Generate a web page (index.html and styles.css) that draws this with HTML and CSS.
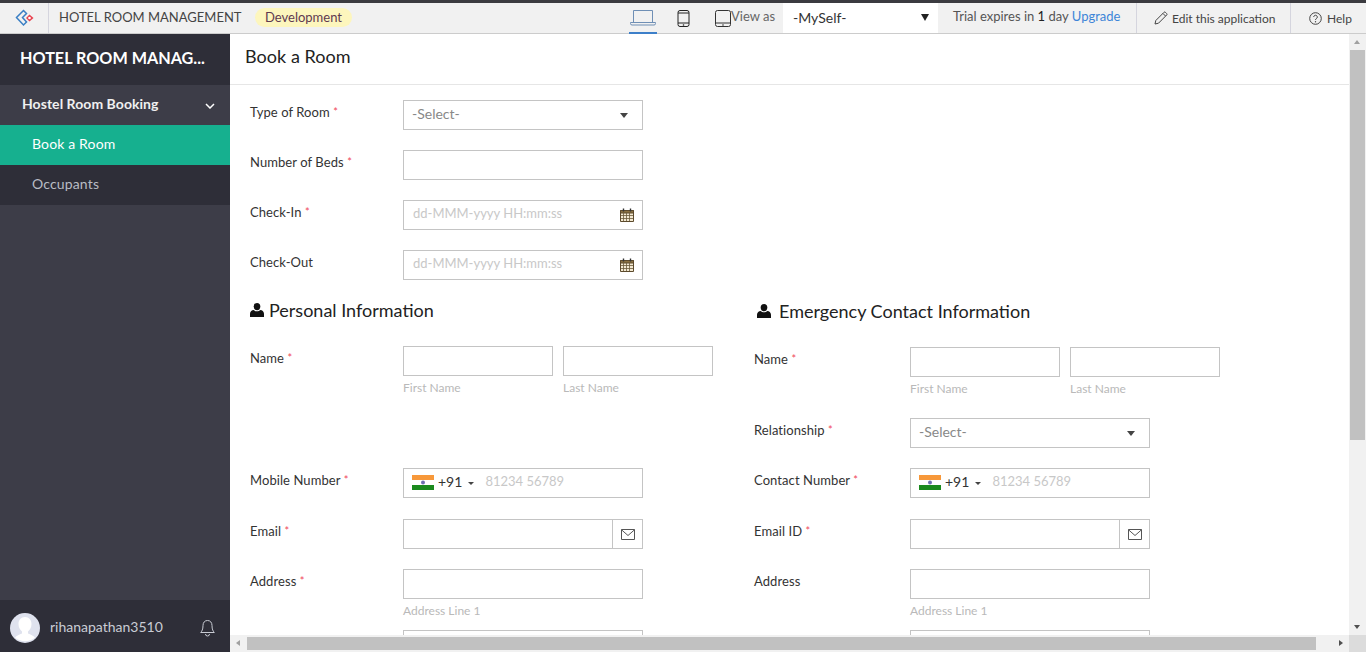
FILE: index.html
```html
<!DOCTYPE html>
<html lang="en">
<head>
  <meta charset="UTF-8">
  <title>Hotel Room Management</title>
  <link rel="stylesheet" href="styles.css">
</head>
<body>
  <svg class="defs" width="0" height="0">
    <symbol id="cal" viewBox="0 0 14 14">
      <path d="M.5 2.500h13v11H.5z" fill="#f3e9d2" stroke="#5c4a2c"/>
      <path d="M.5 2.500h13v2.500H.5z" fill="#8a7140" stroke="#5c4a2c"/>
      <path d="M3.500 5v8M6.500 5v8M9.500 5v8M1 7.500h12M1 10.500h12" stroke="#6b5a3a" stroke-width=".8" fill="none"/>
      <path d="M3.500 .5v3M10.500 .5v3" stroke="#333" stroke-width="1.400"/>
    </symbol>
    <symbol id="person" viewBox="0 0 14 14">
      <ellipse cx="7" cy="3.600" rx="3.300" ry="3.600" fill="#111"/>
      <path d="M0 14v-3.200C0 8.600 2 7.300 3.600 7.100 4.600 8 5.700 8.300 7 8.300S9.400 8 10.400 7.100C12 7.300 14 8.600 14 10.800V14z" fill="#111"/>
    </symbol>
    <symbol id="flag" viewBox="0 0 22 15">
      <path d="M0 0h22v5H0z" fill="#f7983a"/>
      <path d="M0 5h22v5H0z" fill="#fff"/>
      <path d="M0 10h22v5H0z" fill="#1b8a1e"/>
      <circle cx="11" cy="7.500" r="2" fill="#6d6fb0"/>
    </symbol>
    <symbol id="mail" viewBox="0 0 14 11">
      <path d="M.5.500h13v10H.5z" fill="none" stroke="#555"/>
      <path d="M.5.800 7 6.500 13.500.800" fill="none" stroke="#555"/>
    </symbol>
  </svg>

  <header class="topbar">
    <div class="logo">
      <svg width="20" height="18" viewBox="0 0 20 18">
        <path d="M8.500 1.500 1.500 8.500l7 7.500 3-3-4-4.500 4-4z" fill="none" stroke="#3a7fc4" stroke-width="1.500"/>
        <path d="M14.500 5.500l4 3.500-4 3.500-3.500-3.500z" fill="#e8424f"/>
        <circle cx="14.500" cy="9" r="1.300" fill="#fff"/>
      </svg>
    </div>
    <span class="app-name">HOTEL ROOM MANAGEMENT</span>
    <span class="env-pill">Development</span>
    <div class="device active">
      <svg width="26" height="17" viewBox="0 0 26 17"><path d="M3.500 1.500h19v12h-19z" fill="none" stroke="#6f8fb5"/><path d="M.5 13.500h25v1a1.500 1.500 0 0 1-1.500 1.500H2a1.500 1.500 0 0 1-1.500-1.500z" fill="none" stroke="#6f8fb5"/></svg>
    </div>
    <div class="device phone">
      <svg width="13" height="17" viewBox="0 0 13 17"><rect x="1" y=".5" width="11" height="16" rx="2" fill="none" stroke="#222"/><path d="M1 3h11M1 13h11" stroke="#222"/><circle cx="6.500" cy="15" r=".8" fill="#222"/></svg>
    </div>
    <div class="device tablet">
      <svg width="16" height="17" viewBox="0 0 16 17"><rect x=".5" y=".5" width="15" height="16" rx="2" fill="none" stroke="#333"/><path d="M.5 13h15" stroke="#333"/><circle cx="8" cy="15" r=".8" fill="#333"/></svg>
    </div>
    <span class="view-as">View as</span>
    <div class="view-select"><span>-MySelf-</span><i class="caret-big"></i></div>
    <span class="trial">Trial expires in <b>1</b> day <a href="#">Upgrade</a></span>
    <div class="top-action edit">
      <svg width="14" height="14" viewBox="0 0 14 14"><path d="M1 13l.8-3.500L10 1.300a1 1 0 0 1 1.400 0l1.300 1.300a1 1 0 0 1 0 1.400L4.500 12.200z M9 2.500l2.500 2.500" fill="none" stroke="#444"/></svg>
      <span>Edit this application</span>
    </div>
    <div class="top-action help">
      <svg width="13" height="13" viewBox="0 0 13 13"><circle cx="6.500" cy="6.500" r="5.800" fill="none" stroke="#444"/><path d="M4.700 5a1.800 1.800 0 1 1 2.700 1.600c-.6.400-.9.700-.9 1.400" fill="none" stroke="#444"/><circle cx="6.500" cy="9.800" r=".7" fill="#444"/></svg>
      <span>Help</span>
    </div>
  </header>

  <div class="shell">
    <aside class="sidebar">
      <div class="side-title">HOTEL ROOM MANAG...</div>
      <div class="side-group">
        <span>Hostel Room Booking</span>
        <svg width="10" height="6" viewBox="0 0 10 6"><path d="M1 1l4 4 4-4" fill="none" stroke="#fff" stroke-width="1.500"/></svg>
      </div>
      <a class="side-item selected" href="#">Book a Room</a>
      <a class="side-item" href="#">Occupants</a>
      <div class="side-fill"></div>
      <div class="side-user">
        <svg class="avatar" width="30" height="30" viewBox="0 0 30 30">
          <circle cx="15" cy="15" r="15" fill="#dfe2ee"/>
          <path d="M15 4c4 0 6.500 3 6.500 7s-2 6-3.500 7.500v2c2.500 1 5.500 2 7 4a15 15 0 0 1-20 0c1.500-2 4.500-3 7-4v-2C10.500 17 8.500 15 8.500 11s2.500-7 6.500-7z" fill="#fff"/>
        </svg>
        <span class="user-name">rihanapathan3510</span>
        <svg class="bell" width="15" height="18" viewBox="0 0 15 18"><path d="M7.500 1.500c-3 0-4.500 2.300-4.500 5 0 4-1 5.500-2.300 7h13.600C13 12 12 10.500 12 6.500c0-2.700-1.500-5-4.500-5z" fill="none" stroke="#c9ccd4"/><path d="M5.500 15a2 2 0 0 0 4 0" fill="none" stroke="#c9ccd4"/></svg>
      </div>
    </aside>

    <div class="main-wrap">
      <div class="main-row">
        <main class="main">
          <h1 class="page-title">Book a Room</h1>
          <div class="form">
            <div class="field">
              <label>Type of Room <em>*</em></label>
              <div class="select"><span>-Select-</span><i class="caret"></i></div>
            </div>
            <div class="field">
              <label>Number of Beds <em>*</em></label>
              <input class="box" type="text">
            </div>
            <div class="field">
              <label>Check-In <em>*</em></label>
              <div class="box date"><input type="text" placeholder="dd-MMM-yyyy HH:mm:ss"><svg width="14" height="14"><use href="#cal"/></svg></div>
            </div>
            <div class="field">
              <label>Check-Out</label>
              <div class="box date"><input type="text" placeholder="dd-MMM-yyyy HH:mm:ss"><svg width="14" height="14"><use href="#cal"/></svg></div>
            </div>

            <div class="columns">
              <section class="col">
                <h2 class="section-title"><svg width="14" height="14"><use href="#person"/></svg>Personal Information</h2>
                <div class="field tall">
                  <label>Name <em>*</em></label>
                  <div class="name-pair">
                    <div><input class="box" type="text"><small>First Name</small></div>
                    <div><input class="box" type="text"><small>Last Name</small></div>
                  </div>
                </div>
                <div class="field phone-row">
                  <label>Mobile Number <em>*</em></label>
                  <div class="box phone-box"><svg width="22" height="15"><use href="#flag"/></svg><span>+91</span><i class="caret small"></i><input type="text" placeholder="81234 56789"></div>
                </div>
                <div class="field">
                  <label>Email <em>*</em></label>
                  <div class="box email-box"><input type="text"><span class="addon"><svg width="14" height="11"><use href="#mail"/></svg></span></div>
                </div>
                <div class="field addr">
                  <label>Address <em>*</em></label>
                  <div><input class="box" type="text"><small>Address Line 1</small></div>
                </div>
                <div class="field">
                  <label></label>
                  <input class="box" type="text">
                </div>
              </section>

              <section class="col right">
                <h2 class="section-title"><svg width="14" height="14"><use href="#person"/></svg>Emergency Contact Information</h2>
                <div class="field named">
                  <label>Name <em>*</em></label>
                  <div class="name-pair">
                    <div><input class="box" type="text"><small>First Name</small></div>
                    <div><input class="box" type="text"><small>Last Name</small></div>
                  </div>
                </div>
                <div class="field">
                  <label>Relationship <em>*</em></label>
                  <div class="select"><span>-Select-</span><i class="caret"></i></div>
                </div>
                <div class="field phone-row">
                  <label>Contact Number <em>*</em></label>
                  <div class="box phone-box"><svg width="22" height="15"><use href="#flag"/></svg><span>+91</span><i class="caret small"></i><input type="text" placeholder="81234 56789"></div>
                </div>
                <div class="field">
                  <label>Email ID <em>*</em></label>
                  <div class="box email-box"><input type="text"><span class="addon"><svg width="14" height="11"><use href="#mail"/></svg></span></div>
                </div>
                <div class="field addr">
                  <label>Address</label>
                  <div><input class="box" type="text"><small>Address Line 1</small></div>
                </div>
                <div class="field">
                  <label></label>
                  <input class="box" type="text">
                </div>
              </section>
            </div>
          </div>
        </main>
        <div class="vscroll">
          <i class="arrow up"></i>
          <div class="vthumb"></div>
          <i class="arrow down"></i>
        </div>
      </div>
      <div class="hscroll">
        <i class="arrow left"></i>
        <div class="hthumb"></div>
        <i class="arrow right"></i>
        <div class="corner"></div>
      </div>
    </div>
  </div>
</body>
</html>
```

FILE: styles.css
```css
:root {
  --side-dark: #2e2e38;
  --side-mid: #3d3d48;
  --green: #16b08f;
  --line: #c4c4c4;
  --scroll: #f1f1f1;
  --thumb: #c1c1c1;
}

* {
  box-sizing: border-box;
}

html, body {
  height: 100%;
}

body {
  margin: 0;
  overflow: hidden;
  font-family: Lato, "Open Sans", sans-serif;
  font-size: 13px;
  color: #333;
  background: #fff;
  display: flex;
  flex-direction: column;
}

.defs {
  display: none;
}

/* top bar */
.topbar {
  height: 34px;
  flex: none;
  display: flex;
  align-items: center;
  background: #f1f1f1;
  border-top: 3px solid #3b3b40;
  border-bottom: 1px solid #ccc;
}

.logo {
  width: 49px;
  height: 100%;
  padding-left: 15px;
  display: flex;
  align-items: center;
  border-right: 1px solid #d5d5de;
}

.app-name {
  margin: 0 0 2px 10px;
  width: 196px;
  color: #444;
  white-space: nowrap;
}

.env-pill {
  width: 97px;
  height: 19px;
  line-height: 18px;
  margin-bottom: 2px;
  text-align: center;
  background: #fdf6bd;
  border-radius: 10px;
  color: #5f3a50;
}

.device {
  height: 100%;
  display: flex;
  align-items: center;
}

.device.active {
  margin-left: 277px;
  width: 28px;
  justify-content: center;
  border-bottom: 2px solid #3d7fc9;
  margin-bottom: -1px;
  height: calc(100% + 1px);
}

.device.phone {
  margin-left: 20px;
}

.device.tablet {
  margin-left: 25px;
}

.view-as {
  width: 52px;
  margin-bottom: 4px;
  color: #666;
}

.view-select {
  width: 155px;
  height: 100%;
  padding: 0 9px 2px 10px;
  background: #fff;
  display: flex;
  align-items: center;
  justify-content: space-between;
  font-size: 14px;
  color: #333;
}

.caret-big {
  border-top: 7px solid #222;
  border-left: 4px solid transparent;
  border-right: 4px solid transparent;
}

.trial {
  width: 198px;
  padding-left: 15px;
  margin-bottom: 4px;
  color: #555;
  white-space: nowrap;
}

.trial b {
  color: #222;
  font-weight: 400;
}

.trial a {
  color: #3d85d8;
  text-decoration: none;
}

.top-action {
  height: 100%;
  display: flex;
  align-items: center;
  gap: 4px;
  border-left: 1px solid #d5d5de;
  color: #444;
  font-size: 12px;
  white-space: nowrap;
}

.top-action.edit {
  width: 154px;
  padding-left: 17px;
}

.top-action.help {
  padding-left: 18px;
  gap: 5px;
}

/* sidebar */
.shell {
  flex: 1;
  min-height: 0;
  display: flex;
}

.sidebar {
  width: 230px;
  flex: none;
  display: flex;
  flex-direction: column;
  background: var(--side-mid);
  color: #fff;
}

.side-title {
  height: 51px;
  line-height: 47px;
  padding-left: 20px;
  background: var(--side-dark);
  font-size: 16.200px;
  font-weight: 700;
  white-space: nowrap;
}

.side-group {
  height: 40px;
  padding: 0 15px 4px 22px;
  display: flex;
  align-items: center;
  justify-content: space-between;
  font-size: 14px;
  font-weight: 700;
  letter-spacing: .05px;
  color: #f0f0f0;
}

.side-group svg {
  margin-top: 5px;
}

.side-item {
  height: 40px;
  line-height: 38px;
  padding-left: 32px;
  background: var(--side-dark);
  color: #b9bcc4;
  font-size: 14px;
  letter-spacing: .15px;
  text-decoration: none;
}

.side-item.selected {
  background: var(--green);
  color: #fff;
}

.side-fill {
  flex: 1;
}

.side-user {
  height: 52px;
  padding-left: 10px;
  display: flex;
  align-items: center;
  background: var(--side-dark);
}

.avatar {
  margin-top: 3px;
}

.user-name {
  margin-left: 10px;
  width: 150px;
  font-size: 14px;
  color: #c9ccd4;
}

.bell {
  margin-top: 4px;
}

/* main */
.main-wrap {
  flex: 1;
  min-width: 0;
  display: flex;
  flex-direction: column;
}

.main-row {
  flex: 1;
  min-height: 0;
  display: flex;
}

.main {
  flex: 1;
  min-width: 0;
  overflow: hidden;
}

.page-title {
  height: 51px;
  margin: 0;
  padding-left: 15px;
  line-height: 44px;
  font-size: 18px;
  font-weight: 400;
  letter-spacing: .05px;
  color: #222;
  border-bottom: 1px solid #e6e6e6;
}

.form {
  padding: 15px 0 0 20px;
}

.field {
  display: grid;
  grid-template-columns: 153px 240px;
  margin-bottom: 20px;
  min-height: 30px;
}

.col.right .field {
  grid-template-columns: 156px 240px;
}

.field label {
  line-height: 24px;
  letter-spacing: .08px;
  color: #333;
}

.field em {
  color: #f0485a;
  font-style: normal;
  font-size: 11px;
  line-height: 0;
  vertical-align: 1px;
}

.field.tall {
  height: 102px;
}

.field.named {
  height: 51px;
}

.field.phone-row {
  height: 31px;
}

.field.addr {
  height: 41px;
}

.box {
  width: 100%;
  height: 30px;
  display: block;
  border: 1px solid var(--line);
  background: #fff;
  font: inherit;
  outline: none;
}

input {
  font: inherit;
  font-size: 13px;
  border: 0;
  outline: none;
  min-width: 0;
  background: transparent;
}

input::placeholder {
  color: #c8c8c8;
  opacity: 1;
}

.select {
  height: 30px;
  padding: 0 14px 3px 8px;
  border: 1px solid var(--line);
  display: flex;
  align-items: center;
  justify-content: space-between;
  font-size: 14px;
  color: #888;
}

.caret {
  margin-top: 3px;
  border-top: 5px solid #444;
  border-left: 4px solid transparent;
  border-right: 4px solid transparent;
}

.caret.small {
  border-top-width: 3px;
  border-left-width: 3px;
  border-right-width: 3px;
}

.date {
  display: flex;
  align-items: center;
  padding: 0 8px 0 9px;
}

.date input {
  flex: 1;
  height: 26px;
  padding: 0 0 5px;
}

.columns {
  display: flex;
}

.col {
  width: 504px;
}

.section-title {
  height: 46px;
  margin: 0;
  padding-bottom: 26px;
  display: flex;
  align-items: center;
  gap: 5px;
  font-size: 18px;
  font-weight: 400;
  color: #222;
}

.col.right .section-title {
  height: 47px;
  padding-left: 3px;
  gap: 8px;
}

.name-pair {
  display: flex;
  gap: 10px;
  width: 310px;
}

.name-pair > div {
  width: 150px;
  flex: none;
}

small {
  display: block;
  margin-top: 4px;
  font-size: 12px;
  color: #b9b9b9;
}

.phone-box {
  display: flex;
  align-items: center;
  padding: 0 0 1px 8px;
  font-size: 14px;
  color: #333;
}

.phone-box span {
  margin: -3px 0 0 4px;
}

.phone-box .caret {
  margin: 1px 0 0 6px;
}

.phone-box input {
  flex: 1;
  margin-left: 11px;
  padding: 0 0 4px;
  height: 26px;
}

.email-box {
  display: flex;
}

.email-box input {
  flex: 1;
}

.addon {
  width: 30px;
  flex: none;
  display: flex;
  align-items: center;
  justify-content: center;
  border-left: 1px solid var(--line);
}

/* scrollbars */
.vscroll {
  width: 17px;
  flex: none;
  padding-top: 16px;
  position: relative;
  background: var(--scroll);
}

.vthumb {
  width: 15px;
  height: 390px;
  margin-left: 1px;
  background: var(--thumb);
}

.hscroll {
  height: 17px;
  flex: none;
  display: flex;
  align-items: center;
  position: relative;
  background: var(--scroll);
}

.hthumb {
  width: 1069px;
  height: 13px;
  margin-left: 17px;
  background: var(--thumb);
}

.corner {
  width: 17px;
  height: 17px;
  margin-left: auto;
  background: #dcdcdc;
}

.arrow {
  position: absolute;
  width: 0;
  height: 0;
}

.arrow.up {
  top: 6px;
  left: 5px;
  border-bottom: 4px solid #a0a0a0;
  border-left: 3.500px solid transparent;
  border-right: 3.500px solid transparent;
}

.arrow.down {
  bottom: 6px;
  left: 5px;
  border-top: 4px solid #505050;
  border-left: 3.500px solid transparent;
  border-right: 3.500px solid transparent;
}

.arrow.left {
  top: 5px;
  left: 6px;
  border-right: 4px solid #a0a0a0;
  border-top: 3.500px solid transparent;
  border-bottom: 3.500px solid transparent;
}

.arrow.right {
  top: 5px;
  right: 23px;
  border-left: 4px solid #505050;
  border-top: 3.500px solid transparent;
  border-bottom: 3.500px solid transparent;
}
```
